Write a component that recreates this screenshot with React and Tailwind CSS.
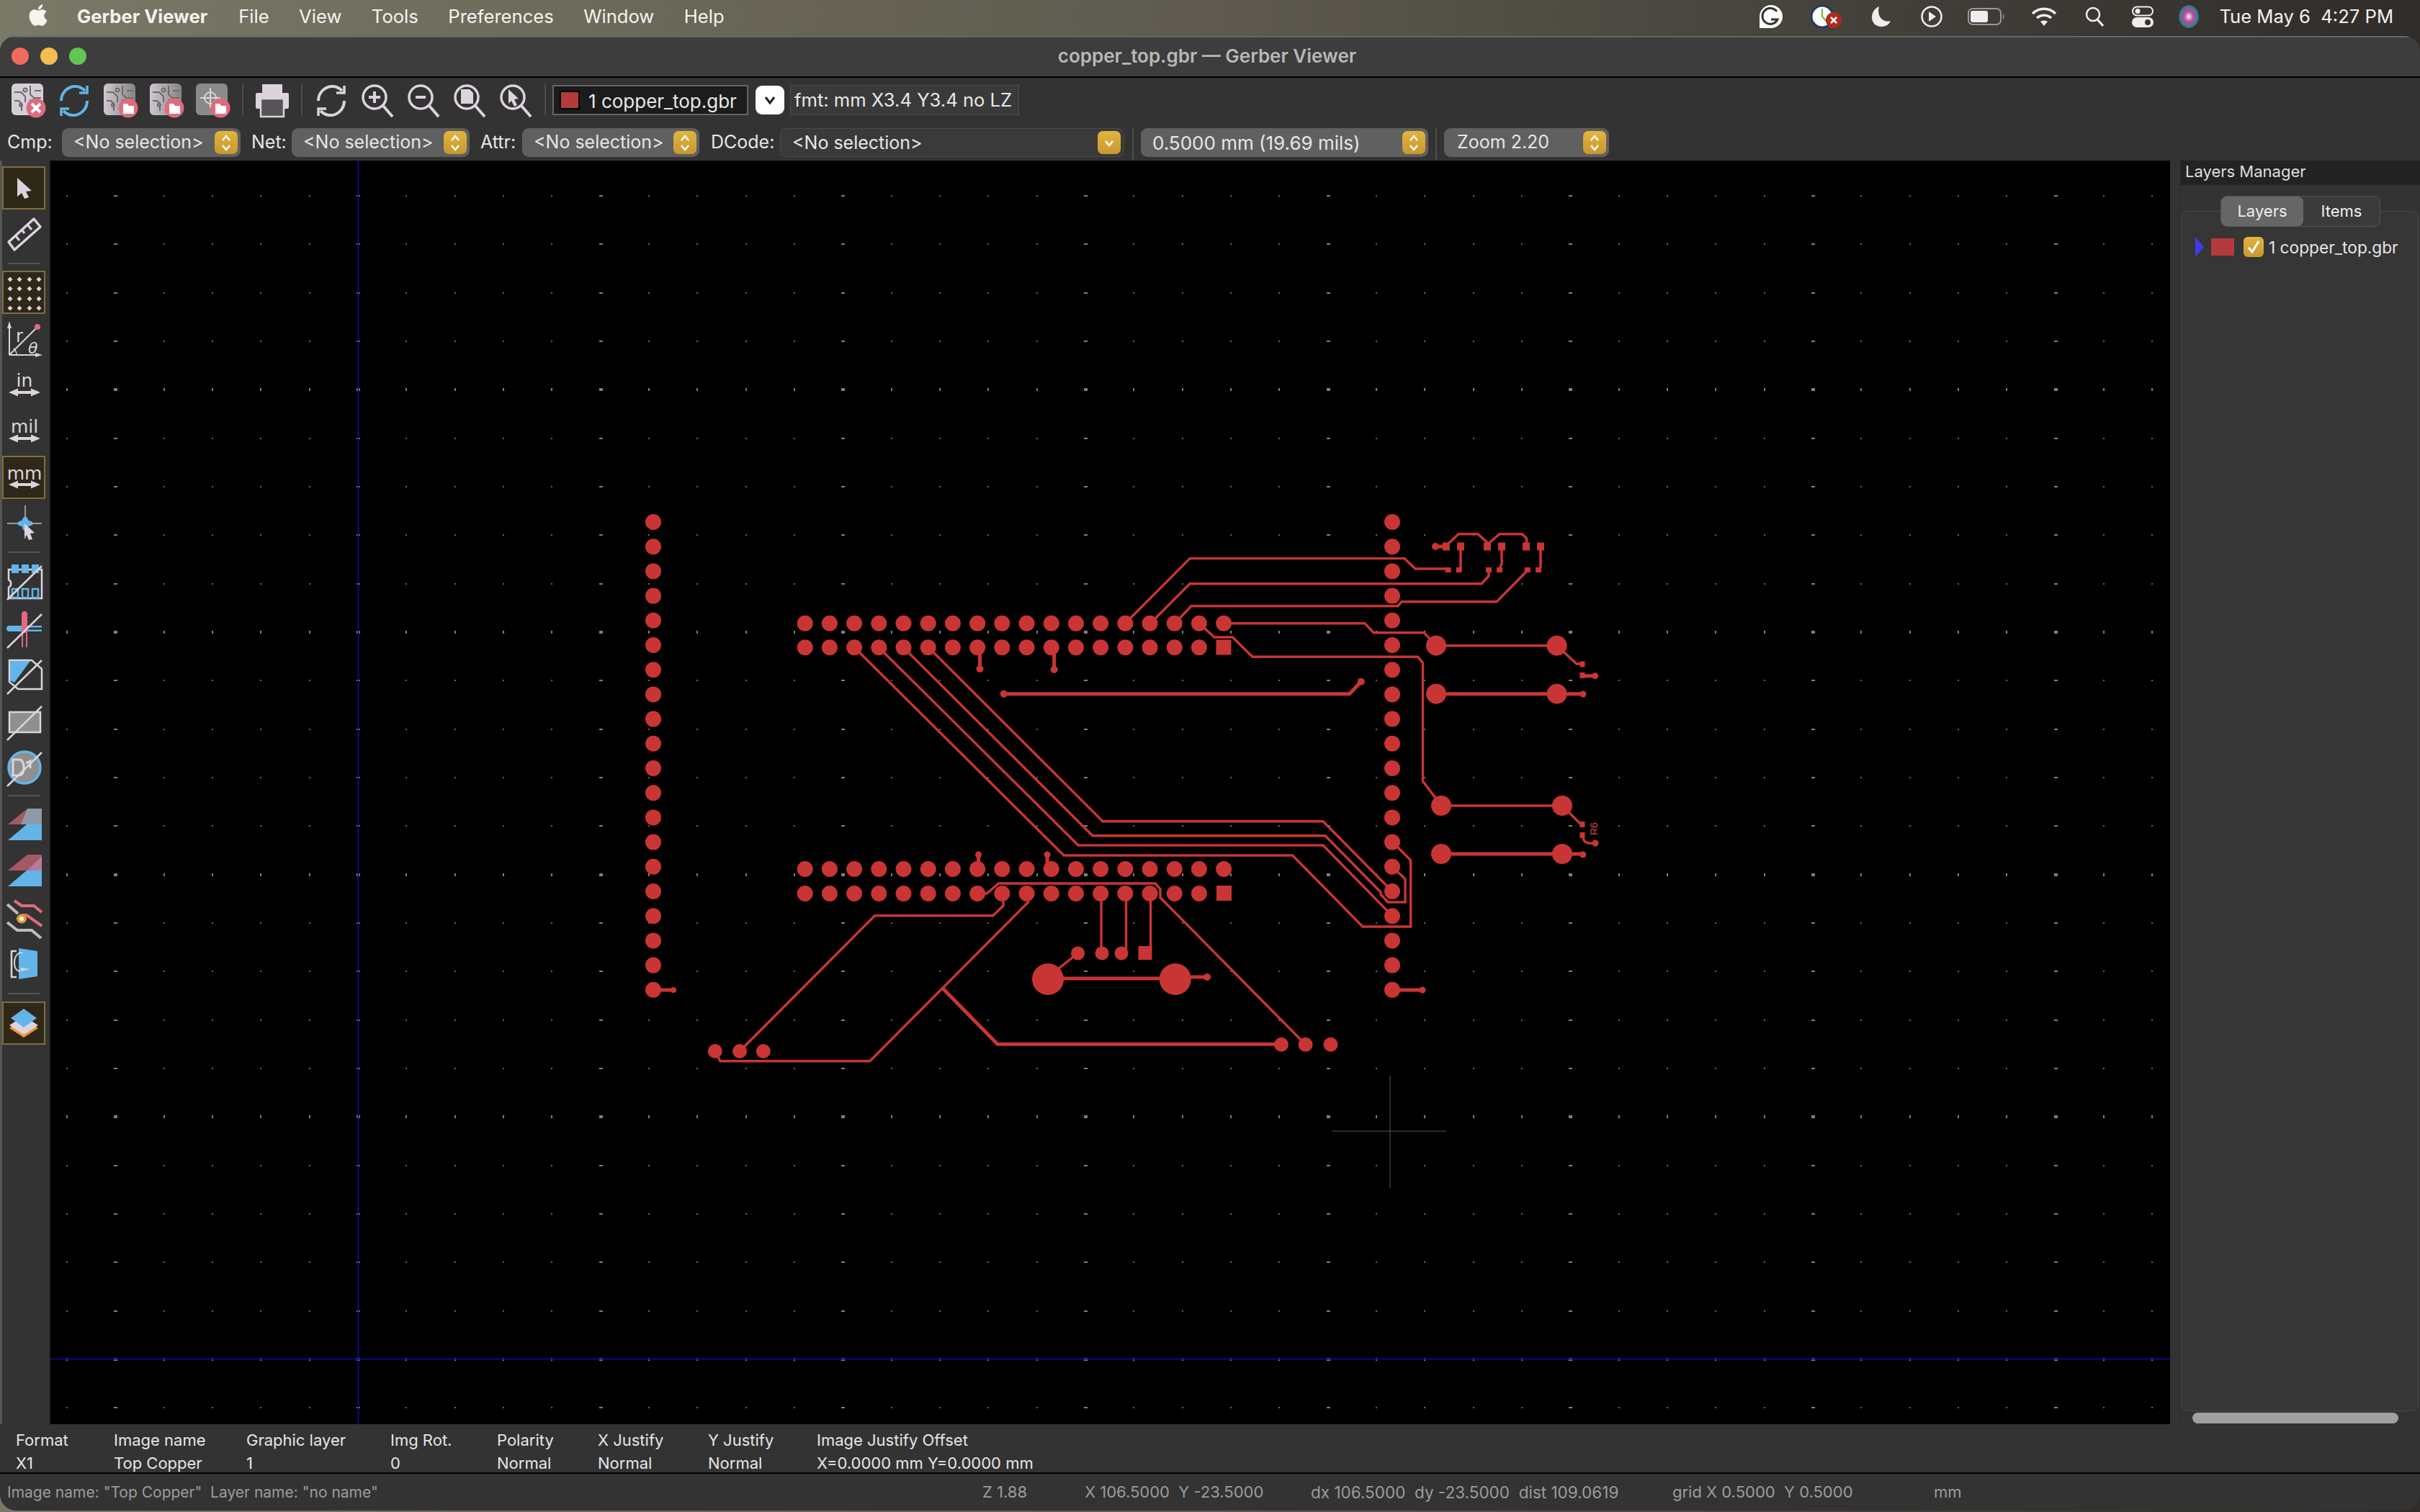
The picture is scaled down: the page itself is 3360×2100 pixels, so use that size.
import React from "react";
import { FaApple } from "react-icons/fa";

const L = "#dcd3dc";
const PINK = "#e06a7e";
const BLUE = "#63b4e8";
const CU = "#c93535";

function range(n) {
  return Array.from({ length: n }, (_, i) => i);
}

/* ---------- toolbar icons ---------- */
function Traces({ c = "#6d6a6d" }) {
  return (
    <g stroke={c} strokeWidth="2" fill="none">
      <path d="M4 12h9l6 6v8M4 24h6l4 4v10M26 3v12l5 5h10M26 28v-6M41 10h-9M41 30h-8l-5-5" />
      <circle cx="19" cy="9" r="2.5" />
      <circle cx="13" cy="30" r="2" />
    </g>
  );
}
function Badge({ kind }) {
  return (
    <g>
      <circle cx="34" cy="34" r="13.5" fill={PINK} />
      {kind === "x" ? (
        <path d="M28 28l12 12M40 28l-12 12" stroke="#fff" strokeWidth="4" />
      ) : (
        <path d="M27 28h6l2 3h7v11H27z" fill="#fff" />
      )}
    </g>
  );
}
function Pcb({ badge, flat }) {
  return (
    <svg width="48" height="48" viewBox="0 0 48 48">
      <defs>
        <linearGradient id="pg" x1="0" x2="1">
          <stop offset="0" stopColor="#cfc7cf" />
          <stop offset="1" stopColor="#858585" />
        </linearGradient>
      </defs>
      <rect x="0" y="0" width="44" height="44" rx="6" fill={flat ? "#d5cfd5" : "url(#pg)"} />
      <Traces />
      <Badge kind={badge} />
    </svg>
  );
}
function Target() {
  return (
    <svg width="48" height="48" viewBox="0 0 48 48">
      <rect x="0" y="0" width="44" height="44" rx="6" fill="#8a8a8a" />
      <g stroke={L} strokeWidth="2" fill="none">
        <circle cx="20" cy="20" r="8" />
        <path d="M20 6v28M6 20h28" />
      </g>
      <Badge kind="f" />
    </svg>
  );
}
function Sync({ c }) {
  return (
    <svg width="48" height="48" viewBox="0 0 48 48" fill="none" stroke={c} strokeWidth="4">
      <path d="M5 24C5 12 15 3 26 4c5 .5 9 3 12 6" />
      <path d="M41 3v10H30" strokeWidth="3.5" />
      <path d="M41 24c0 12-10 21-21 20-5-.5-9-3-12-6" />
      <path d="M5 45V35h11" strokeWidth="3.5" />
    </svg>
  );
}
function Printer() {
  return (
    <svg width="48" height="48" viewBox="0 0 48 48">
      <rect x="10" y="1" width="28" height="12" fill={L} />
      <rect x="1" y="13" width="46" height="22" rx="2" fill={L} />
      <rect x="8" y="21" width="32" height="25" fill="#555" stroke={L} strokeWidth="2.5" />
    </svg>
  );
}
function Zoom({ kind }) {
  return (
    <svg width="48" height="48" viewBox="0 0 48 48" fill="none" stroke={L}>
      <circle cx="19" cy="19" r="16" strokeWidth="3.5" />
      <path d="M31 31l13 15" strokeWidth="4" />
      {kind === "in" && <path d="M19 11v16M11 19h16" strokeWidth="4" />}
      {kind === "out" && <path d="M12 19h14" strokeWidth="4" />}
      {kind === "fit" && <path d="M11 8h12l5 5v15H11z" fill={L} stroke="none" />}
      {kind === "sel" && <path d="M13 8l14 13-6 1 4 8-4 2-4-8-4 4z" fill={L} stroke="none" />}
    </svg>
  );
}

/* ---------- left toolbar icons (60 x 60) ---------- */
function S({ children }) {
  return (
    <svg width="60" height="60" viewBox="0 0 60 60" fill="none">
      {children}
    </svg>
  );
}
const Strike = () => <path d="M7 57L55 10" stroke={L} strokeWidth="2.5" />;
const Arrow2 = ({ y }) => <path d={`M9 ${y}l13-5.5v3.5h18v-3.5l13 5.5-13 5.5v-3.5H22v3.5z`} fill={L} />;
const Unit = ({ t, y }) => (
  <S>
    <text x="31" y={y} textAnchor="middle" fill={L} style={{ fontFamily: "'DejaVu Sans',sans-serif", fontSize: 25 }}>
      {t}
    </text>
    <Arrow2 y={40} />
  </S>
);
const icons = {
  arrow: (
    <S>
      <path d="M21 16l20 18-8 1 4 8-6 2-4-8-6 5z" fill={L} />
    </S>
  ),
  ruler: (
    <S>
      <path d="M9 41L44 9l9 11-36 32z" stroke={L} strokeWidth="3.5" strokeLinejoin="round" />
      <path d="M19 33l5 6M28 25l3 4M36 18l5 6" stroke={L} strokeWidth="3" />
    </S>
  ),
  grid: (
    <S>
      {[11, 24, 38, 51].map((x) =>
        [12, 25, 39, 52].map((y) => (
          <path key={x + "-" + y} d={`M${x} ${y - 3.5}l3.5 3.5-3.5 3.5-3.5-3.5z`} fill={L} />
        ))
      )}
    </S>
  ),
  polar: (
    <S>
      <path d="M10 52V12M10 52h38M10 52L49 13" stroke={L} strokeWidth="2" />
      <path d="M10 5l-3 10h6zM56 52l-10-3v6z" fill={L} />
      <path d="M20 52c0-4-2-7-4-9" stroke={L} strokeWidth="1.5" />
      <circle cx="49" cy="13" r="4" fill={PINK} />
      <text x="19" y="34" fill={L} style={{ fontFamily: "'DejaVu Sans',sans-serif", fontSize: 24 }}>r</text>
      <text x="36" y="50" fill={L} style={{ fontFamily: "'DejaVu Sans',sans-serif", fontSize: 22, fontStyle: "italic" }}>θ</text>
    </S>
  ),
  in: <Unit t="in" y={32} />,
  mil: <Unit t="mil" y={32} />,
  mm: <Unit t="mm" y={33} />,
  cross: (
    <S>
      <path d="M7 30h48M32 5v46" stroke="#9a9a9a" strokeWidth="2" />
      <path d="M21 30c0-2 4-4 7-4 0-3 1-5 4-5s4 2 4 5c3 0 7 2 7 4s-4 4-7 4c0 3-1 6-4 6s-4-3-4-6c-3 0-7-2-7-4z" fill={BLUE} />
      <path d="M31 30l14 13-6 1 3 8-5 1-3-7-3 3z" fill={L} />
    </S>
  ),
  comp: (
    <S>
      <path d="M9 15h46v40H9V40l3-3v-5l-3-3z" stroke={L} strokeWidth="2.5" />
      {[13, 27, 41].map((x) => (
        <rect key={x} x={x} y="8" width="10" height="12" fill={BLUE} />
      ))}
      {[13, 27, 41].map((x) => (
        <rect key={x} x={x + 1} y="42" width="8" height="12" fill="none" stroke={BLUE} strokeWidth="2.5" />
      ))}
      <Strike />
    </S>
  ),
  led: (
    <S>
      <path d="M10 26h20v8H10a4 4 0 010-8zM30 26h25v2.5H30zM30 31.5h25V34H30z" fill={BLUE} />
      <path d="M27 10a4 4 0 014-4 4 4 0 014 4v46h-2V36h-4v20h-2z" fill={PINK} />
      <path d="M7 57L55 10" stroke={L} strokeWidth="2.5" />
    </S>
  ),
  poly: (
    <S>
      <path d="M10 10h31l14 12v28H22L10 40z" stroke={L} strokeWidth="2.5" />
      <path d="M11 11h28L17 41l-6-3z" fill={BLUE} />
      <Strike />
    </S>
  ),
  rect: (
    <S>
      <rect x="10" y="18" width="43" height="28" fill="#8f8f8f" stroke={L} strokeWidth="2.5" />
      <Strike />
    </S>
  ),
  d1: (
    <S>
      <ellipse cx="31" cy="31" rx="22" ry="22" fill="#8f8f8f" stroke={BLUE} strokeWidth="3.5" />
      <path d="M15 20h8c5 0 7 4 7 11s-2 11-7 11h-8z" stroke={L} strokeWidth="3" />
      <path d="M33 25l6-3v10" stroke={L} strokeWidth="3" />
      <Strike />
    </S>
  ),
  lay1: (
    <S>
      <path d="M8 30L35 8h20v22z" fill="#a25a66" />
      <path d="M35 8h20v22H26z" fill="#8e9aa6" />
      <path d="M8 52l26-22h21v22z" fill={BLUE} />
    </S>
  ),
  lay2: (
    <S>
      <path d="M8 30L35 8h20v22z" fill="#a25a66" />
      <path d="M35 30L55 10v20z" fill="#b57d9d" />
      <path d="M8 52l26-22h21v22z" fill={BLUE} />
    </S>
  ),
  via: (
    <S>
      <path d="M17 5l10 7h17l11 9M27 25l7 0 21 15" stroke={PINK} strokeWidth="4" />
      <path d="M7 10l15 13M7 35l14 11h20l13 11" stroke="#bdbdbd" strokeWidth="4" />
      <ellipse cx="27" cy="30" rx="7" ry="6.5" fill="#e89a30" />
      <circle cx="27" cy="30" r="3" fill="#fff" />
    </S>
  ),
  flip: (
    <S>
      <path d="M20 12h-7v36h7M13 22v-2M13 40v-2" stroke={L} strokeWidth="2.5" />
      <path d="M23 8l26 4v35l-26 4z" fill={BLUE} />
      <path d="M28 14c-8 0-11 7-11 15 0 6 3 11 8 11" stroke={L} strokeWidth="2" />
      <path d="M26 35l13 2-13 3z" fill={L} />
    </S>
  ),
  stack: (
    <S>
      <path d="M30 24l20 13-20 13-20-13z" fill="#e89a30" />
      <path d="M30 20l20 13-20 13-20-13z" fill={L} />
      <path d="M30 10l18 13-18 13-18-13z" fill={BLUE} />
    </S>
  ),
};
function Tool({ i, on, cls = "" }) {
  return (
    <div
      className={`w-[60px] h-[60px] shrink-0 border-[2px] flex items-center justify-center ${
        on ? "bg-[#2f2818] border-[#7d6f3e]" : "border-transparent"
      } ${cls}`}
    >
      <div className="shrink-0">{icons[i]}</div>
    </div>
  );
}
function HSep({ h }) {
  return (
    <div className={`w-[60px] shrink-0 flex items-center justify-center ${h}`}>
      <div className="w-[44px] h-[2px] bg-[#555]" />
    </div>
  );
}

/* ---------- selects ---------- */
function Gold({ dbl }) {
  return (
    <div className="w-[32px] h-[32px] rounded-[7px] bg-gradient-to-b from-[#e2b53e] to-[#c7982f] flex items-center justify-center shrink-0">
      <svg width="20" height="26" viewBox="0 0 20 26" fill="none" stroke="#fff" strokeWidth="2.5">
        {dbl && <path d="M5 10l5-6 5 6" />}
        <path d={dbl ? "M5 17l5 6 5-6" : "M5 11l5 6 5-6"} />
      </svg>
    </div>
  );
}
function Select({ w, children, flat, txt = "" }) {
  return (
    <div
      className={`${w} h-[40px] rounded-[9px] flex items-center justify-between pl-[16px] pr-[4px] text-[#e6e6e6] ${
        flat ? "bg-[#3a3a3a] border border-[#4a4a4a]" : "bg-[#606060]"
      }`}
    >
      <span className={`whitespace-pre ${txt}`}>{children}</span>
      <Gold dbl={!flat} />
    </div>
  );
}
const VSep = ({ cls }) => <div className={`w-[2px] h-[44px] bg-[#4d4d4d] ${cls}`} />;

/* ---------- PCB ---------- */
const pads = [];
const squares = [];
range(20).forEach((n) => {
  pads.push([907, 725 + 34.2 * n, 11]);
  pads.push([1933, 725 + 34.2 * n, 11]);
});
range(18).forEach((n) => {
  const x = 1117.7 + 34.2 * n;
  pads.push([x, 865.7, 11]);
  pads.push([x, 1207, 11]);
  if (n < 17) {
    pads.push([x, 899.3, 11]);
    pads.push([x, 1241, 11]);
  }
});
squares.push([1688.5, 888.5, 21, 21], [1689, 1230, 21, 21], [1580.5, 1314, 19, 19]);
[
  [1994, 896.7, 14],
  [2161.6, 896.7, 14],
  [1994, 963.7, 14],
  [2161.6, 963.7, 14],
  [2001, 1119, 14],
  [2169, 1119, 14],
  [2001, 1186, 14],
  [2169, 1186, 14],
  [1455, 1360, 22],
  [1631.8, 1360, 22],
  [992.8, 1460, 10],
  [1027, 1460, 10],
  [1059.8, 1460, 10],
  [1779, 1450.7, 10],
  [1812.6, 1450.7, 10],
  [1847.5, 1450.7, 10],
  [1496.5, 1324, 9.5],
  [1530, 1324, 9.5],
  [1557, 1324, 9.5],
  [1360.5, 929, 5],
  [1463.6, 930, 5],
  [1393.7, 963.7, 5],
  [1889.8, 946.7, 5],
  [1358.5, 1187, 4.5],
  [1454, 1187, 4.5],
  [1676, 1357, 5],
  [1993, 759, 5],
  [2214.7, 938.7, 4.5],
  [2198, 964, 4.5],
  [2197.7, 1187, 4.5],
  [2215, 1171, 4.5],
  [1975, 1375, 4.5],
  [935, 1375, 4],
].forEach((p) => pads.push(p));
[2007.8, 2028, 2065, 2085, 2119, 2139].forEach((x) => squares.push([x - 5, 753.5, 10, 11]));
[2010.6, 2025.7, 2067, 2082, 2120.8, 2136].forEach((x) => squares.push([x - 4, 788, 8, 7]));
squares.push([2193.5, 918.5, 7, 8], [2193.5, 934, 7, 8], [2193.5, 1141, 7, 8], [2193.5, 1156, 7, 8]);

const thin = [
  "M1186 899L1477 1188H1794.6L1892 1287H1958.7V1195L1933 1169",
  "M1220 899L1497 1174H1837L1933 1272",
  "M1254 899L1517 1160.7H1840L1917 1239V1242L1927 1253H1951V1220.7L1933 1204",
  "M1289 899L1531 1140.7H1837L1933 1238",
  "M1562 866L1652 775.6H1950L1965 790H2009",
  "M1597 866L1652 810.7H2057L2067 800V792",
  "M1631 866L1654 841.7H1941L1946 835.7H2078L2120 793",
  "M1699 865.7H1895L1907 878.7H1977L1994 896.7",
  "M1665 866L1686 885H1711.4L1739 912.3H1968.6L1975.5 920.7V1085L2001 1119",
  "M1994 896.7H2161.6L2189 922H2196",
  "M2001 1119H2169L2195 1145",
  "M2011 755L2025 741.7H2052L2066.5 755L2082 741.7H2113.5L2119.6 748V755",
  "M2028 760V790H2025.7M2085 760V783L2082 790M2139 760V788L2136 791",
  "M1393 1241V1258L1378.6 1271.7H1214.5L1027 1460",
  "M992.8 1460L1000 1473.7H1207.8L1428.8 1251.7",
  "M1357 1241H1370L1386.6 1227H1604L1611 1235V1246.7L1812.6 1450.7",
  "M1529 1241V1324M1563.5 1241V1324M1597.6 1241V1320",
  "M1496.5 1324L1470 1345",
  "M2198 1162C2198 1170 2204 1172 2215 1171",
];
const thick = [
  "M1393.7 963.7H1873.5L1889.8 946.7",
  "M1994 963.7H2198",
  "M2001 1186H2197.7",
  "M1455 1359H1632M1640 1357H1676",
  "M1308 1371.7L1385 1450.3H1779",
  "M907 1375H935M1933 1375H1975",
  "M1360.5 899V929M1463.6 899V930M1358.5 1207V1187M1454 1187V1202L1460 1207",
  "M1993 759H2008M2197 938.7H2214.7",
];

function Board() {
  const dots = [];
  range(44).forEach((i) =>
    range(26).forEach((j) => {
      const x = 93 + 67.33 * i;
      const y = 272 + 67.33 * j;
      const mx = i % 5 === 1;
      const my = j % 5 === 4;
      dots.push(
        <rect
          key={i + "_" + j}
          x={Math.round(x) - (mx ? 2 : 1)}
          y={Math.round(y) - (my ? 2 : 1)}
          width={mx ? 5 : 2}
          height={my ? 4 : 2}
          fill={mx || my ? "#808080" : "#666666"}
          shapeRendering="crispEdges"
        />
      );
    })
  );
  return (
    <svg className="w-full h-full block" viewBox="70 223 2943 1755">
      {dots}
      <path d="M497.5 223V1978M70 1887.5H3013" stroke="#0a0a8c" strokeWidth="2" />
      <path d="M1849 1571H2008M1930 1494V1650" stroke="#555" strokeWidth="1" />
      <g stroke={CU} fill="none" strokeLinejoin="miter">
        {thin.map((d) => (
          <path key={d} d={d} strokeWidth="3.4" />
        ))}
        {thick.map((d) => (
          <path key={d} d={d} strokeWidth="5" />
        ))}
      </g>
      {pads.map(([x, y, r], i) => (
        <circle key={i} cx={x} cy={y} r={r} fill={CU} />
      ))}
      {squares.map(([x, y, w, h], i) => (
        <rect key={i} x={x} y={y} width={w} height={h} fill={CU} />
      ))}
      <text
        transform="translate(2218 1160) rotate(-90)"
        fill="#d04545"
        style={{ fontFamily: "'Liberation Sans',sans-serif", fontSize: 14 }}
      >
        R6
      </text>
    </svg>
  );
}

/* ---------- menu bar right icons ---------- */
function MenuIcons() {
  return (
    <div className="flex items-center h-full">
      <svg width="32" height="34" viewBox="0 0 32 34">
        <path d="M16 1a16 16 0 110 32H0V17A16 16 0 0116 1z" fill="#fff" />
        <path d="M24 10a11 11 0 10 1 11h-9" fill="none" stroke="#333" strokeWidth="3" />
      </svg>
      <svg width="44" height="36" viewBox="0 0 44 36" className="ml-[39px]">
        <circle cx="16" cy="18" r="15" fill="#fff" stroke="#1d3b66" strokeWidth="3" />
        <path d="M16 7v11l6 7" stroke="#6fae4a" strokeWidth="2" fill="none" />
        <circle cx="32" cy="23" r="11" fill="#b02a1e" />
        <path d="M28 19l8 8M36 19l-8 8" stroke="#fff" strokeWidth="2.5" />
      </svg>
      <svg width="28" height="30" viewBox="0 0 28 30" className="ml-[40px]">
        <path d="M11 1C4 4 1 10 1 16c0 8 6 13 13 13 6 0 11-3 13-8-10 3-20-6-16-20z" fill="#eee" />
      </svg>
      <svg width="30" height="30" viewBox="0 0 30 30" className="ml-[41px]" fill="none">
        <circle cx="15" cy="15" r="13.5" stroke="#eee" strokeWidth="2.5" />
        <path d="M11 8l10 7-10 7z" fill="#eee" />
      </svg>
      <svg width="52" height="24" viewBox="0 0 52 24" className="ml-[35px]" fill="none">
        <rect x="1" y="1" width="45" height="22" rx="6" stroke="#999" strokeWidth="2" />
        <rect x="4" y="4" width="24" height="16" rx="3" fill="#eee" />
        <path d="M49 8c2 1 2 7 0 8z" fill="#999" />
      </svg>
      <svg width="36" height="28" viewBox="0 0 36 28" className="ml-[36px]" fill="none" stroke="#eee" strokeWidth="3.5">
        <path d="M2 10c9-9 23-9 32 0M8 16c6-5 14-5 20 0" />
        <path d="M13 21c3-2 7-2 10 0l-5 6z" fill="#eee" stroke="none" />
      </svg>
      <svg width="26" height="28" viewBox="0 0 26 28" className="ml-[39px]" fill="none" stroke="#eee" strokeWidth="2.5">
        <circle cx="11" cy="11" r="9" />
        <path d="M17 18l8 9" strokeWidth="3" />
      </svg>
      <svg width="30" height="30" viewBox="0 0 30 30" className="ml-[39px]">
        <rect x="1" y="1.5" width="28" height="12" rx="6" fill="none" stroke="#eee" strokeWidth="2" />
        <circle cx="8" cy="7.5" r="3.5" fill="#eee" />
        <rect x="0" y="16" width="30" height="14" rx="7" fill="#eee" />
        <circle cx="22" cy="23" r="4" fill="#333" />
      </svg>
      <svg width="28" height="32" viewBox="0 0 28 32" className="ml-[35px]">
        <defs>
          <radialGradient id="siri" cx="0.5" cy="0.5" r="0.55">
            <stop offset="0" stopColor="#f2f2ff" />
            <stop offset="0.4" stopColor="#c04a9c" />
            <stop offset="0.8" stopColor="#3d7c8c" />
            <stop offset="1" stopColor="#2b4a70" />
          </radialGradient>
        </defs>
        <ellipse cx="14" cy="16" rx="14" ry="16" fill="url(#siri)" />
      </svg>
    </div>
  );
}

const infoCols = [
  ["w-[136px]", "Format", "X1"],
  ["w-[184px]", "Image name", "Top Copper"],
  ["w-[200px]", "Graphic layer", "1"],
  ["w-[148px]", "Img Rot.", "0"],
  ["w-[140px]", "Polarity", "Normal"],
  ["w-[153px]", "X Justify", "Normal"],
  ["w-[151px]", "Y Justify", "Normal"],
  ["w-[400px]", "Image Justify Offset", "X=0.0000 mm Y=0.0000 mm"],
];

const Lbl = ({ cls, children }) => <span className={`h-[40px] flex items-center shrink-0 ${cls}`}>{children}</span>;

export default function App() {
  return (
    <div
      className="w-[3360px] h-[2100px] flex flex-col overflow-hidden bg-gradient-to-r from-[#7a7967] via-[#5e5a4f] to-[#2f2c2a]"
      style={{ fontFamily: "Inter, 'Liberation Sans', sans-serif" }}
    >
      {/* menu bar */}
      <div className="h-[50px] shrink-0 flex items-center text-[25.6px] text-[#f4f4f0] pl-[38px] pr-[37px] pb-[4px]">
        <FaApple className="w-[30px] h-[34px] text-[#f4f4f0] -mt-[4px]" />
        <span className="ml-[39px] font-bold">Gerber Viewer</span>
        <span className="ml-[43px]">File</span>
        <span className="ml-[41.5px]">View</span>
        <span className="ml-[41.5px]">Tools</span>
        <span className="ml-[41.5px]">Preferences</span>
        <span className="ml-[41.5px]">Window</span>
        <span className="ml-[41.5px]">Help</span>
        <div className="flex-1" />
        <MenuIcons />
        <span className="ml-[28px] whitespace-pre">Tue May 6  4:27 PM</span>
      </div>

      {/* window */}
      <div className="h-[2048px] shrink-0 rounded-[22px] overflow-hidden bg-[#333333] flex flex-col text-[#e6e6e6]">
        <div className="relative h-[56px] shrink-0 bg-[#3d3d3d] border-t-[2px] border-[#666] flex items-center justify-center">
          <div className="absolute left-[16px] top-[14px] flex gap-[16px]">
            <span className="w-[24px] h-[24px] rounded-full bg-[#f26a5d]" />
            <span className="w-[24px] h-[24px] rounded-full bg-[#f6bd4f]" />
            <span className="w-[24px] h-[24px] rounded-full bg-[#62c554]" />
          </div>
          <span className="text-[26px] font-semibold text-[#b8b8b8] -ml-[8px] -mt-[3px]">copper_top.gbr — Gerber Viewer</span>
        </div>
        <div className="h-[2px] shrink-0 bg-black" />

        {/* toolbar row 1 */}
        <div className="h-[70px] shrink-0 flex items-start pt-[8px] pl-[16px] text-[26px]">
          <div className="flex gap-[16px]">
            <Pcb badge="x" flat />
            <Sync c={BLUE} />
            <Pcb badge="f" />
            <Pcb badge="f" />
            <Target />
          </div>
          <VSep cls="ml-[16px]" />
          <div className="ml-[16px]">
            <Printer />
          </div>
          <VSep cls="ml-[16px]" />
          <div className="flex gap-[16px] ml-[17px]">
            <Sync c={L} />
            <Zoom kind="in" />
            <Zoom kind="out" />
            <Zoom kind="fit" />
            <Zoom kind="sel" />
          </div>
          <VSep cls="ml-[15px]" />
          <div className="ml-[9px] mt-[2px] w-[272px] h-[42px] bg-[#1c1c1c] border-[2px] border-[#666] flex items-center pl-[8px]">
            <span className="w-[28px] h-[26px] bg-[#b53b3b] border-[2px] border-black" />
            <span className="ml-[12px] text-[#e8e8e8] mt-[2px]">1 copper_top.gbr</span>
          </div>
          <div className="ml-[10px] mt-[3px] w-[40px] h-[40px] rounded-[9px] bg-white flex items-center justify-center">
            <svg width="18" height="14" viewBox="0 0 18 14" fill="none" stroke="#222" strokeWidth="3">
              <path d="M3 3l6 8 6-8" />
            </svg>
          </div>
          <div className="ml-[8px] mt-[2px] w-[318px] h-[42px] bg-[#3a3a3a] border border-[#4d4d4d] flex items-center pl-[5px] text-[25.6px] text-[#e8e8e8]">
            fmt: mm X3.4 Y3.4 no LZ
          </div>
        </div>

        {/* toolbar row 2 */}
        <div className="h-[45px] shrink-0 flex items-start pl-[10px] text-[25px]">
          <Lbl cls="w-[76px]">Cmp:</Lbl>
          <Select w="w-[248px]">{"<No selection>"}</Select>
          <Lbl cls="ml-[15px] w-[56px]">Net:</Lbl>
          <Select w="w-[247px]">{"<No selection>"}</Select>
          <Lbl cls="ml-[15px] w-[58px]">Attr:</Lbl>
          <Select w="w-[246px]">{"<No selection>"}</Select>
          <Lbl cls="ml-[16px] w-[96px]">DCode:</Lbl>
          <Select w="w-[478px]" flat txt="mt-[2px]">{"<No selection>"}</Select>
          <VSep cls="ml-[11px] h-[40px]" />
          <div className="ml-[10px]">
            <Select w="w-[399px]" txt="text-[26px]">0.5000 mm (19.69 mils)</Select>
          </div>
          <VSep cls="ml-[10px] h-[40px]" />
          <div className="ml-[10px]">
            <Select w="w-[229px]" txt="ml-[2px]">Zoom 2.20</Select>
          </div>
        </div>

        {/* body */}
        <div className="h-[1755px] shrink-0 flex">
          <div className="w-[70px] shrink-0 border-l-[3px] border-[#555] border-r-[2px] border-r-[#262626] flex flex-col gap-[4px] pt-[8px]">
            <Tool i="arrow" on />
            <Tool i="ruler" />
            <HSep h="h-[13px]" />
            <Tool i="grid" on />
            <Tool i="polar" cls="mt-[1px]" />
            <Tool i="in" />
            <Tool i="mil" />
            <Tool i="mm" on />
            <Tool i="cross" />
            <HSep h="h-[11px]" />
            <Tool i="comp" />
            <Tool i="led" cls="mt-[3px]" />
            <Tool i="poly" />
            <Tool i="rect" />
            <Tool i="d1" />
            <HSep h="h-[12px]" />
            <Tool i="lay1" />
            <Tool i="lay2" />
            <Tool i="via" cls="mt-[3px]" />
            <Tool i="flip" cls="-mt-[1px]" />
            <HSep h="h-[14px]" />
            <Tool i="stack" on />
          </div>
          <div className="w-[2943px] shrink-0 bg-black">
            <Board />
          </div>
          <div className="w-[15px] shrink-0 border-r border-[#2a2a2a]" />
          <div className="w-[332px] shrink-0 flex flex-col">
            <div className="h-[34px] shrink-0 bg-[#232323] pl-[6px] flex items-center text-[22px] text-[#dedede] pb-[3px]">Layers Manager</div>
            <div className="relative flex-1 pt-[36px] pr-[2px] overflow-hidden">
              <div className="absolute left-[55px] top-[15px] w-[222px] h-[43px] rounded-[9px] border border-[#555] bg-[#3a3a3a] flex text-[22px]">
                <div className="w-[114px] rounded-[8px] bg-[#666] flex items-center justify-center text-[#eee]">Layers</div>
                <div className="flex-1 flex items-center justify-center text-[#eee]">Items</div>
              </div>
              <div className="h-[1667px] rounded-[9px] border border-[#484848] bg-[#363636] pt-[35px] pl-[19px] flex items-start text-[23px] text-[#e6e6e6]">
                <svg width="12" height="28" viewBox="0 0 12 28" className="shrink-0">
                  <path d="M0 0l12 14L0 28z" fill="#3c3cf0" />
                </svg>
                <span className="ml-[10px] w-[32px] h-[24px] shrink-0 bg-[#b53b3b] mt-[2px]" />
                <span className="ml-[13px] w-[28px] h-[28px] shrink-0 rounded-[6px] bg-gradient-to-b from-[#e2b53e] to-[#c7982f] flex items-center justify-center">
                  <svg width="20" height="20" viewBox="0 0 20 20" fill="none" stroke="#fff" strokeWidth="3">
                    <path d="M3 11l5 6L17 2" />
                  </svg>
                </span>
                <span className="ml-[7px] -mt-[2px] whitespace-pre text-[22.7px]">1 copper_top.gbr</span>
              </div>
              <div className="mt-[2px] ml-[16px] w-[286px] h-[15px] rounded-full bg-[#a0a0a0]" />
            </div>
          </div>
        </div>

        {/* info */}
        <div className="h-[67px] shrink-0 flex pl-[22px] pt-[9px] text-[22px] text-[#e6e6e6]">
          {infoCols.map(([w, a, b]) => (
            <div key={a} className={`${w} shrink-0 flex flex-col gap-[5px] leading-[27px] whitespace-pre`}>
              <span>{a}</span>
              <span>{b}</span>
            </div>
          ))}
        </div>
        <div className="h-[2px] shrink-0 bg-black" />

        {/* status */}
        <div className="h-[51px] shrink-0 flex items-center pl-[10px] text-[21px] text-[#9c9c9c] whitespace-pre">
          <span className="w-[1354px]">{'Image name: "Top Copper"  Layer name: "no name"'}</span>
          <span className="w-[142px] text-[22px]">Z 1.88</span>
          <span className="w-[314px] text-[22px]">X 106.5000  Y -23.5000</span>
          <span className="w-[502px] text-[22.5px]">dx 106.5000  dy -23.5000  dist 109.0619</span>
          <span className="w-[363px] text-[22px]">grid X 0.5000  Y 0.5000</span>
          <span className="text-[22px]">mm</span>
        </div>
      </div>
    </div>
  );
}
